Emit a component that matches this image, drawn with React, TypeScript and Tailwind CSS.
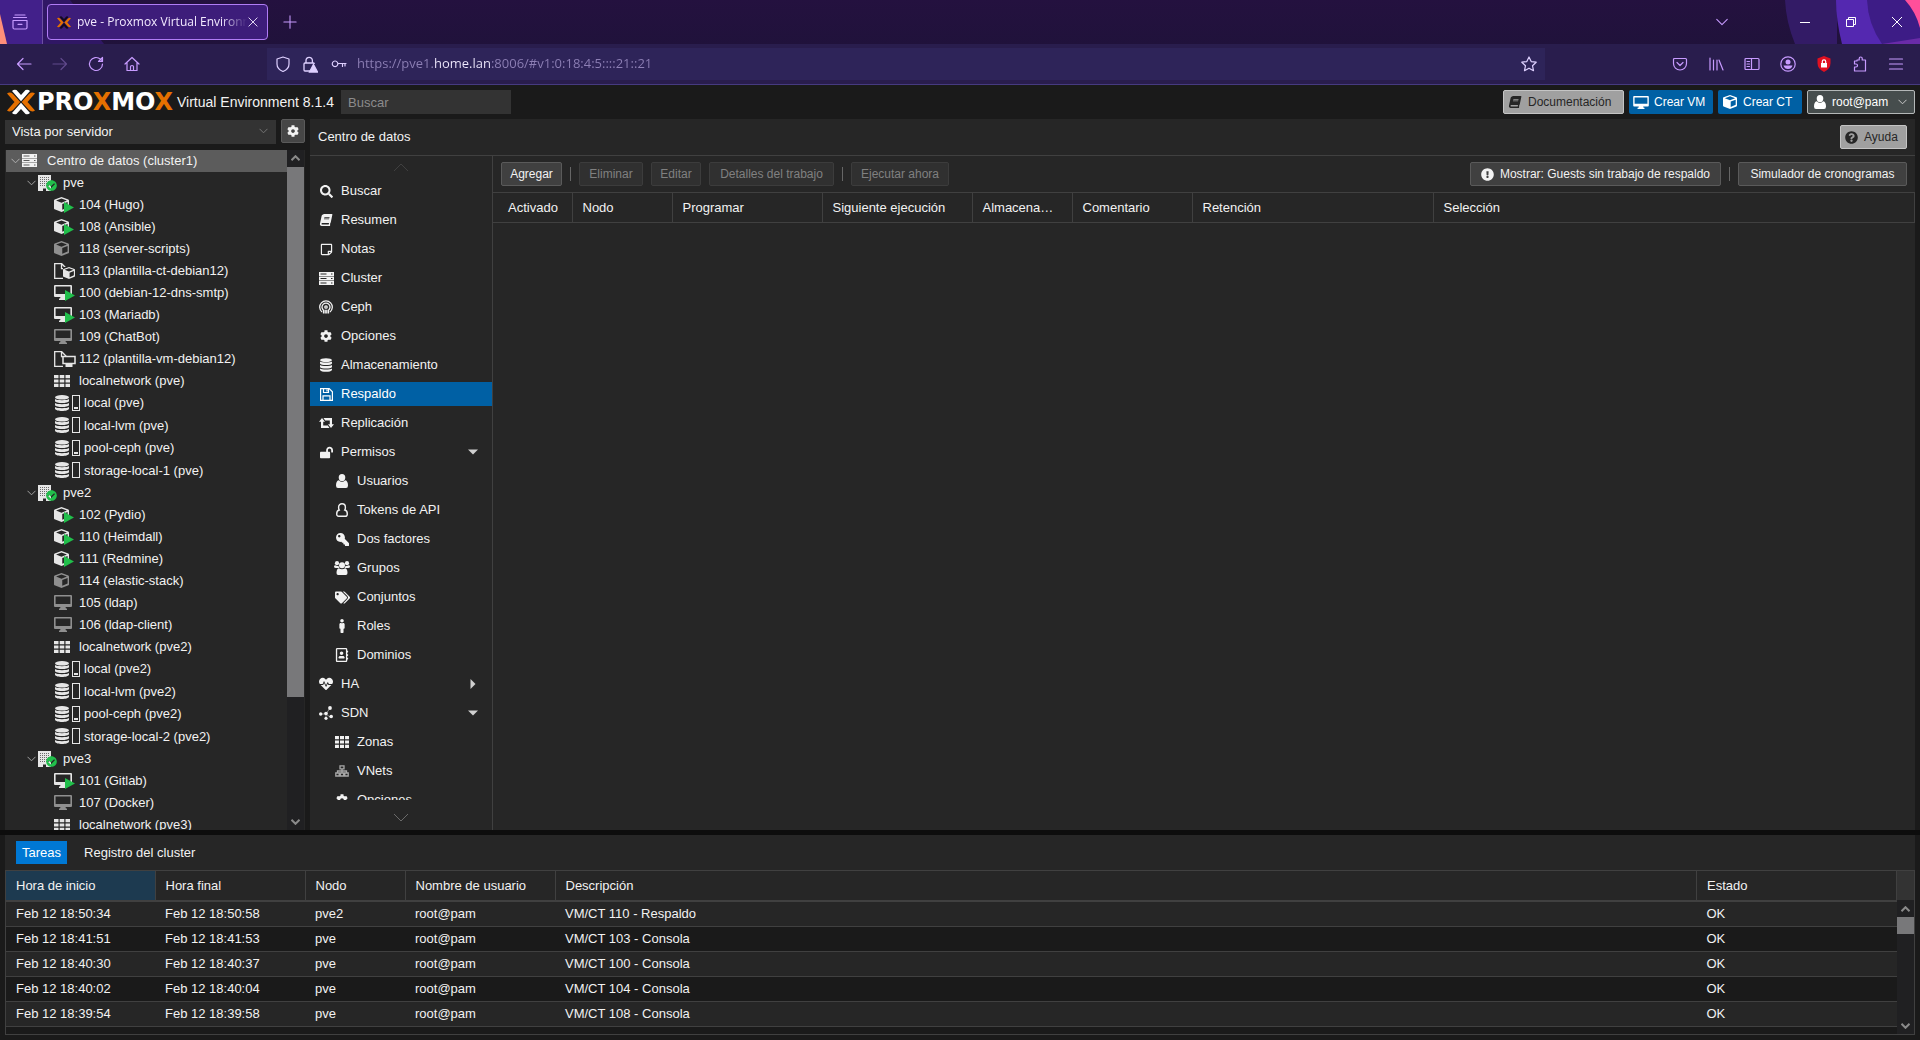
import type { ReactNode } from "react";
import { FaBook, FaCheckCircle, FaCog, FaExclamationCircle, FaHeartbeat, FaKey, FaLockOpen, FaMale, FaQuestionCircle, FaRegAddressBook, FaRegStickyNote, FaSearch, FaTags } from "react-icons/fa";

/* ---------- icons ---------- */

function ServerIcon() {
  return (
    <svg width="15" height="13" viewBox="0 0 15 13" fill="currentColor">
      <path fillRule="evenodd" d="M0 0h15v4H0zM1.500 1.500v1h6v-1zM12 1.500v1h1.500v-1zM0 4.500h15v4H0zM1.500 6v1h6v-1zM12 6v1h1.500v-1zM0 9h15v4H0zM1.500 10.500v1h6v-1zM12 10.500v1h1.500v-1z" />
    </svg>
  );
}

function GridIcon({ width = 16 }: { width?: number }) {
  return (
    <svg className="shrink-0" width={width} height="12" viewBox="0 0 16 12" preserveAspectRatio="none" fill="currentColor">
      <path d="M0 0h4.500v3.200H0zM5.700 0h4.600v3.200H5.700zM11.500 0H16v3.200h-4.500zM0 4.400h4.500v3.200H0zM5.700 4.400h4.600v3.200H5.700zM11.500 4.400H16v3.200h-4.500zM0 8.800h4.500V12H0zM5.700 8.800h4.600V12H5.700zM11.500 8.800H16V12h-4.500z" />
    </svg>
  );
}

function DatabaseIcon({ height = 16 }: { height?: number }) {
  return (
    <svg width={height === 16 ? 14 : 12} height={height} viewBox="0 0 14 16" fill="currentColor">
      <ellipse cx="7" cy="2.300" rx="7" ry="2.300" />
      <path d="M0 4c1.500 1.600 12.500 1.600 14 0v2.200c-1 2.400-13 2.400-14 0zM0 8c1.500 1.600 12.500 1.600 14 0v2.200c-1 2.400-13 2.400-14 0zM0 12c1.500 1.600 12.500 1.600 14 0v1.700c-1 3-13 3-14 0z" />
    </svg>
  );
}

function MonitorIcon({ width = 18 }: { width?: number }) {
  return (
    <svg width={width} height={width - 3} viewBox="0 0 18 15" fill="currentColor">
      <path fillRule="evenodd" d="M1 0h16q1 0 1 1v10q0 1-1 1h-5.500l.5 1.500h1V15H5v-1.500h1l.5-1.500H1q-1 0-1-1V1q0-1 1-1zM1.600 1.600v7.400h14.800V1.600z" />
    </svg>
  );
}

function CubeIcon({ size = 15, className = "" }: { size?: number; className?: string }) {
  return (
    <svg className={className} width={size} height={size} viewBox="0 0 16 16" fill="currentColor">
      <path fillRule="evenodd" d="M8 0l7.300 2.700q.7.300.7 1V12q0 .8-.6 1.100L8.600 15.800q-.6.300-1.200 0L.6 13.100Q0 12.800 0 12V3.700q0-.7.700-1zM8 1.500L2.200 3.800 8 6l5.800-2.200zM8.800 7.500v6.200l5.700-2.600V5.300z" />
    </svg>
  );
}

function BuildingIcon() {
  return (
    <svg width="13" height="16" viewBox="0 0 13 16">
      <path fill="currentColor" d="M0 0h13v16H8v-2.500H5V16H0z" />
      <path stroke="#6a6a6a" strokeWidth="1" strokeDasharray="1 1" d="M2 2.500h9M2 4.500h9M2 6.500h9M2 8.500h9M2 10.500h9" />
    </svg>
  );
}

function PersonIcon({ outline = false }: { outline?: boolean }) {
  return (
    <svg width="12" height="14" viewBox="0 0 12 14" fill={outline ? "none" : "currentColor"} stroke="currentColor" strokeWidth={outline ? 1.4 : 0}>
      <path d={outline
        ? "M3.200 7C2.700 6.300 2.600 5 2.600 4.200 2.600 2.200 4 .8 6 .8s3.400 1.400 3.400 3.400c0 .8-.1 2.100-.6 2.800 1.700.4 2.500 1.700 2.500 3.900 0 1.500-.7 2.400-2 2.400H2.700c-1.300 0-2-.9-2-2.400C.7 8.700 1.500 7.400 3.200 7z"
        : "M6 0a3.200 3.500 0 0 1 0 7.200A3.200 3.500 0 0 1 6 0zM2.700 6.300Q6 9.500 9.300 6.300 12 7 12 11.500q0 2.500-2 2.500H2q-2 0-2-2.500Q0 7 2.700 6.300z"} />
    </svg>
  );
}

function GroupIcon() {
  return (
    <svg width="16" height="14" viewBox="0 0 16 14" fill="currentColor">
      <circle cx="3" cy="2.200" r="2.100" />
      <circle cx="13" cy="2.200" r="2.100" />
      <circle cx="8" cy="4.200" r="3" />
      <path d="M1.500 4.200Q3 5.300 4.500 4.700 4.700 6.300 5.500 7H2Q0 7 0 5.500q0-1.300 1.500-1.300zM14.500 4.200Q13 5.300 11.500 4.700 11.300 6.300 10.500 7H14q2 0 2-1.500 0-1.300-1.500-1.300zM4.800 7.200q3.200 2 6.400 0 2.300.8 2.300 4.800 0 2-1.700 2H4.200q-1.700 0-1.700-2 0-4 2.300-4.800z" />
    </svg>
  );
}

function FloppyIcon() {
  return (
    <svg width="13" height="13" viewBox="0 0 13 13" fill="none" stroke="currentColor" strokeWidth="1.200">
      <path d="M.6.6h8.600l3.200 3.200v8.600H.6zM3 12V7.800h7V12M3.500.8v3.700h5V.8M7 1.500v2" />
    </svg>
  );
}

function RetweetIcon() {
  return (
    <svg width="15" height="10" viewBox="0 0 15 10" fill="currentColor">
      <path d="M3 0l3 3.700H4.200V7.500h4.600L10.500 10H2V3.700H0zM12 10L9 6.300h1.800V2.500H6.200L4.500 0H13v6.300h2z" />
    </svg>
  );
}

function CephIcon() {
  return (
    <svg width="14" height="14" viewBox="0 0 14 14" fill="none" stroke="currentColor" strokeWidth="1.300">
      <circle cx="7" cy="7" r="1.200" />
      <path d="M3 12A6.300 6.300 0 1 1 11 12M4.500 13.500V10.200a4 4 0 1 1 5 0V13.500M6.200 13.500V9.800M7.800 13.500V9.800" />
    </svg>
  );
}

function SdnIcon() {
  return (
    <svg width="14" height="14" viewBox="0 0 14 14" fill="currentColor">
      <path stroke="currentColor" d="M2 8h5l4-6M7 8l4 3M7 8v4" fill="none" strokeWidth=".5" />
      <circle cx="1.700" cy="8" r="1.700" />
      <circle cx="7" cy="7.500" r="1.800" />
      <circle cx="11" cy="2" r="1.900" />
      <circle cx="12.200" cy="10.500" r="1.800" />
      <circle cx="7" cy="12.300" r="1.600" />
    </svg>
  );
}

function NetworkIcon() {
  return (
    <svg width="14" height="12" viewBox="0 0 14 12" fill="none" stroke="#a8a8a8" strokeWidth="1.300">
      <path d="M5 .8h4v3H5zM.8 8h3.400v3H.8zM9.800 8h3.400v3H9.800zM5.300 8h3.400v3H5.300zM7 4v4M2.500 8V6h9v2" />
    </svg>
  );
}

function Chevron({ up = false, className = "" }: { up?: boolean; className?: string }) {
  return (
    <svg className={className} width="9" height="6" viewBox="0 0 9 6" fill="none" stroke="currentColor">
      <path d={up ? "M.5 5.200l4-4 4 4" : "M.5.8l4 4 4-4"} />
    </svg>
  );
}

function LineIcon({ d, size = 16, className = "" }: { d: string; size?: number; className?: string }) {
  return (
    <svg className={className} width={size} height={size} viewBox="0 0 16 16" fill="none" stroke="currentColor" strokeWidth="1.200" strokeLinecap="round" strokeLinejoin="round">
      <path d={d} />
    </svg>
  );
}

/* crossed arms of the logo, upright and sideways */
function XMark({ width, height, upright }: { width: number; height: number; upright: string }) {
  return (
    <svg width={width} height={height} viewBox="0 0 28 26">
      <path fill={upright} d="M5 2q2-2 4.500-1L14 6l4.500-5Q21 0 23 2l-9 10.300zM5 24q2 2 4.500 1L14 20l4.500 5q2.500 1 4.500-1l-9-10.300z" />
      <path fill="#e57000" d="M0 4.500q3-2 6 .5l7.300 8L6 21q-3 2.500-6 .5L7.500 13zM28 4.500q-3-2-6 .5l-7.300 8L22 21q3 2.500 6 .5L20.500 13z" />
    </svg>
  );
}

/* ---------- browser ---------- */

function TabStrip() {
  return (
    <div className="relative h-11 bg-linear-to-b from-[#24113f] to-[#20123b] text-[#c79bff]">
      <svg className="absolute left-0 top-0" width="120" height="44">
        <path fill="#301765" d="M0 0h70l34 44H0z" />
        <path fill="#42208a" d="M0 0h42v44H0z" />
        <path fill="#ff8f7a" d="M0 14l7 30H0z" />
      </svg>
      <svg className="absolute right-0 top-0" width="136" height="44">
        <path fill="#331b66" d="M1 0h52v44H11Q2 22 1 0z" />
        <path fill="#5428b0" d="M52 0h84v44H58Q52 20 52 0z" />
        <path fill="#3d1c86" d="M83 0h53v44H98Q84 24 83 0z" />
        <path fill="#6a2ba8" d="M98 44l38-6v6z" />
        <path fill="#ff4f9a" d="M121 0h15v28Q132 12 121 0z" />
      </svg>
      <div className="relative flex h-full items-center">
        <button aria-label="Firefox View" className="flex h-full w-[43px] items-center justify-center border-r border-[#6d4fa3] pr-0.5">
          <LineIcon d="M3 1h10M1.500 3.500h13M1 6.500h14v7q0 1.500-1.500 1.500h-11Q1 15 1 13.500zM6 10.300h4" />
        </button>
        <div className="ml-1 flex h-9 w-[221px] items-center rounded border border-[#b07cf5] bg-[#3d1d7a] px-2 text-[#f2eaff]">
          <XMark width={16} height={13} upright="#140a1e" />
          <span className="ml-[5px] flex-1 overflow-hidden whitespace-nowrap mask-r-from-85% font-['Open_Sans','Noto_Sans',sans-serif] text-[12px]">pve - Proxmox Virtual Environment</span>
          <button aria-label="Cerrar pestaña">
            <LineIcon size={12} d="M2.500 2.500l11 11M13.500 2.500l-11 11" />
          </button>
        </div>
        <button aria-label="Nueva pestaña" className="ml-[15px]">
          <LineIcon size={14} d="M8 1v14M1 8h14" />
        </button>
        <button aria-label="Listar pestañas" className="ml-auto mr-[70px]">
          <LineIcon size={14} d="M2 5l6 6 6-6" />
        </button>
        <div className="flex gap-[34px] pr-[17px] text-white">
          <button aria-label="Minimizar"><svg width="12" height="12"><path stroke="currentColor" d="M1 6.500h10" /></svg></button>
          <button aria-label="Restaurar"><svg width="12" height="12" fill="none"><path stroke="currentColor" d="M1.500 3.500h7v7h-7zM3.500 3V1.500h7v7H9" /></svg></button>
          <button aria-label="Cerrar"><svg width="12" height="12"><path stroke="currentColor" d="M1 1l10 10M11 1L1 11" /></svg></button>
        </div>
      </div>
    </div>
  );
}

function AddressBar() {
  return (
    <div className="flex h-[41px] items-center border-b border-[#463a80] bg-[#291d4d] text-[#c79bff]">
      <div className="flex w-[267px] items-center gap-5 pl-4">
        <button aria-label="Atrás"><LineIcon d="M15 8H1.500M7 2.500L1.500 8 7 13.500" /></button>
        <button aria-label="Adelante" className="opacity-35"><LineIcon d="M1 8h13.500M9 2.500L14.500 8 9 13.500" /></button>
        <button aria-label="Recargar"><LineIcon d="M14.500 8A6.500 6.500 0 1 1 12.500 3.300L14.500 5M14.500 1.500V5.500H10.500z" /></button>
        <button aria-label="Inicio"><LineIcon d="M1 8l7-6.500L15 8M3 6.500V14.500h10V6.500M6.500 14.500V10.500q0-1 1.500-1t1.500 1v4" /></button>
      </div>
      <div className="flex h-8 flex-1 items-center bg-[#2e2459] px-2 text-[#ded0ff]">
        <LineIcon d="M8 1l6 2v5q0 5-6 7.500Q2 13 2 8V3z" />
        <svg className="ml-[11px]" width="16" height="17" viewBox="0 0 16 17" fill="none" stroke="currentColor" strokeWidth="1.300">
          <path d="M4 7V4.500a3.200 3.200 0 0 1 6.400 0V7M8 15H3q-1 0-1-1V8q0-1 1-1h8.500q.8 0 .8 1" />
          <path fill="currentColor" d="M11.500 8.500L15.500 16h-8z" />
        </svg>
        <LineIcon className="ml-[13px]" d="M4 5a2.800 2.800 0 1 0 .1 0zM7 7.500h8M11.500 7.500v3M14 7.500V10" />
        {/* the host part of the address is lit by a gradient clipped to the text */}
        <input
          aria-label="Dirección"
          defaultValue="https://pve1.home.lan:8006/#v1:0:18:4:5::::21::21"
          className="ml-2.5 flex-1 bg-[linear-gradient(to_right,#8d7fb5_77px,#f0eaff_77px,#f0eaff_134px,#8d7fb5_134px)] bg-clip-text font-['Open_Sans','Noto_Sans',sans-serif] text-[13px] text-transparent outline-none"
        />
        <button aria-label="Marcar página"><LineIcon d="M8 1l2.200 4.600 5 .6-3.700 3.500 1 5L8 12.200 3.500 14.700l1-5L.8 6.200l5-.6z" /></button>
      </div>
      <div className="ml-[127px] mr-4 flex gap-5">
        <button aria-label="Pocket"><LineIcon d="M2.500 2.500h11q1 0 1 1V7.500a6.500 6.500 0 0 1-13 0v-4q0-1 1-1zM5 6.500l3 3 3-3" /></button>
        <button aria-label="Biblioteca"><LineIcon d="M2 2v12M5.500 4v10M9 4v10M11 4l4 10" /></button>
        <button aria-label="Barra lateral"><LineIcon d="M2 2.500h12q1 0 1 1v9q0 1-1 1H2q-1 0-1-1v-9q0-1 1-1zM7.500 2.500v11M3 5.500h2.500M3 8h2.500M3 10.500h2.500" /></button>
        <button aria-label="Cuenta">
          <svg width="16" height="16" viewBox="0 0 16 16" fill="currentColor">
            <circle cx="8" cy="8" r="7.200" fill="none" stroke="currentColor" strokeWidth="1.200" />
            <circle cx="8" cy="6" r="2.500" />
            <path d="M3.500 9.500h9q-1 3.500-4.500 3.500T3.500 9.500z" />
          </svg>
        </button>
        <button aria-label="Bloqueador">
          <svg width="16" height="16" viewBox="0 0 16 16">
            <path fill="#e01020" d="M8 0l6.500 2.500V7q0 6-6.500 9Q1.500 13 1.500 7V2.500z" />
            <path fill="#fff" d="M5 7h6v4.500H5z" />
            <path fill="none" stroke="#fff" strokeWidth="1.200" d="M6.300 7V5.500a1.700 1.700 0 0 1 3.400 0V7" />
          </svg>
        </button>
        <button aria-label="Extensiones"><LineIcon d="M5 5V4h2.200V2.500a1.500 1.500 0 0 1 3 0V4h3.300v11H2.500v-4H4a1.500 1.500 0 0 0 0-3H2.500V5z" /></button>
        <button aria-label="Menú"><LineIcon d="M1.500 3h13M1.500 8h13M1.500 13h13" /></button>
      </div>
    </div>
  );
}

/* ---------- header ---------- */

function Header() {
  return (
    <header className="flex h-[34px] shrink-0 items-center pl-[7px] pr-[5px]">
      <XMark width={28} height={26} upright="#ffffff" />
      <span className="ml-0.5 w-[138px] font-['DejaVu_Sans',sans-serif] text-[24px] font-bold leading-6 text-white">
        PRO<span className="text-[#e57000]">X</span>MO<span className="text-[#e57000]">X</span>
      </span>
      <span className="ml-0.5 w-[164px] whitespace-nowrap text-[14px]">Virtual Environment 8.1.4</span>
      <input aria-label="Buscar" placeholder="Buscar" className="h-6 w-[170px] bg-[#333] px-[7px] text-[13px] outline-none placeholder:text-[#8c8c8c]" />
      <div className="ml-auto flex gap-[5px] text-[12px]">
        <a href="#docs" className="flex h-6 w-[121px] items-center gap-[7px] rounded-xs border border-[#c4c4c4] bg-[#a0a0a0] pl-[5px] text-[#262626]">
          <FaBook size={12} className="-skew-x-12" />
          Documentación
        </a>
        <button className="flex h-6 w-[84px] items-center gap-[5px] whitespace-nowrap rounded-xs bg-[#0060a4] pl-1 text-white">
          <MonitorIcon width={16} />
          Crear VM
        </button>
        <button className="flex h-6 w-[84px] items-center gap-1.5 rounded-xs bg-[#0060a4] pl-[5px] text-white">
          <CubeIcon size={14} />
          Crear CT
        </button>
        <button className="flex h-6 w-[108px] items-center gap-1.5 rounded-xs border border-[#b4b8b8] bg-[#464d4d] pl-1.5 text-white">
          <PersonIcon />
          root@pam
          <Chevron className="ml-1 text-[#c8c8c8]" />
        </button>
      </div>
    </header>
  );
}

/* ---------- resource tree ---------- */

type Kind = "node" | "ct-on" | "ct-off" | "ct-tpl" | "vm-on" | "vm-off" | "vm-tpl" | "net" | "disk" | "disk-used";

const tree: { kind: Kind; label: string }[] = [
  { kind: "node", label: "pve" },
  { kind: "ct-on", label: "104 (Hugo)" },
  { kind: "ct-on", label: "108 (Ansible)" },
  { kind: "ct-off", label: "118 (server-scripts)" },
  { kind: "ct-tpl", label: "113 (plantilla-ct-debian12)" },
  { kind: "vm-on", label: "100 (debian-12-dns-smtp)" },
  { kind: "vm-on", label: "103 (Mariadb)" },
  { kind: "vm-off", label: "109 (ChatBot)" },
  { kind: "vm-tpl", label: "112 (plantilla-vm-debian12)" },
  { kind: "net", label: "localnetwork (pve)" },
  { kind: "disk-used", label: "local (pve)" },
  { kind: "disk", label: "local-lvm (pve)" },
  { kind: "disk-used", label: "pool-ceph (pve)" },
  { kind: "disk", label: "storage-local-1 (pve)" },
  { kind: "node", label: "pve2" },
  { kind: "ct-on", label: "102 (Pydio)" },
  { kind: "ct-on", label: "110 (Heimdall)" },
  { kind: "ct-on", label: "111 (Redmine)" },
  { kind: "ct-off", label: "114 (elastic-stack)" },
  { kind: "vm-off", label: "105 (ldap)" },
  { kind: "vm-off", label: "106 (ldap-client)" },
  { kind: "net", label: "localnetwork (pve2)" },
  { kind: "disk-used", label: "local (pve2)" },
  { kind: "disk", label: "local-lvm (pve2)" },
  { kind: "disk-used", label: "pool-ceph (pve2)" },
  { kind: "disk", label: "storage-local-2 (pve2)" },
  { kind: "node", label: "pve3" },
  { kind: "vm-on", label: "101 (Gitlab)" },
  { kind: "vm-off", label: "107 (Docker)" },
  { kind: "net", label: "localnetwork (pve3)" },
];

function Running() {
  return (
    <svg className="absolute -bottom-px right-0" width="10" height="11" viewBox="0 0 10 11">
      <path fill="#21bf4b" d="M0 0l10 5.500L0 11z" />
    </svg>
  );
}

function TemplateSheet() {
  return (
    <svg width="13" height="16" viewBox="0 0 13 16" fill="none" stroke="currentColor" strokeWidth="1.300">
      <path d="M9 15.300H.7V.7h7l4.500 4.500V7M7.500.7v5H12" />
    </svg>
  );
}

function TreeIcon({ kind }: { kind: Kind }) {
  switch (kind) {
    case "node":
      return (
        <span className="relative flex w-[19px]">
          <BuildingIcon />
          <FaCheckCircle size={11} className="absolute bottom-0 right-0 text-[#21bf4b]" />
        </span>
      );
    case "ct-on":
      return <span className="relative w-5"><CubeIcon /><Running /></span>;
    case "ct-off":
      return <CubeIcon className="text-[#8f8f8f]" />;
    case "ct-tpl":
      return (
        <span className="relative w-[21px]">
          <TemplateSheet />
          <span className="absolute bottom-0 right-0 bg-[#262626]"><CubeIcon size={12} /></span>
        </span>
      );
    case "vm-on":
      return <span className="relative w-[21px]"><MonitorIcon /><Running /></span>;
    case "vm-off":
      return <span className="text-[#8f8f8f]"><MonitorIcon /></span>;
    case "vm-tpl":
      return (
        <span className="relative w-[22px]">
          <TemplateSheet />
          <svg className="absolute bottom-0 right-0" width="14" height="12" viewBox="0 0 14 12">
            <path fill="#262626" stroke="currentColor" strokeWidth="1.500" d="M1 1.500h12v7H1z" />
            <path fill="currentColor" d="M3.500 9h7v3h-7z" />
          </svg>
        </span>
      );
    case "net":
      return <GridIcon />;
    default:
      return (
        <span className="flex gap-[3px] pl-px">
          <DatabaseIcon />
          <span className="flex h-4 w-2 flex-col justify-end border border-current p-px">
            {kind === "disk-used" && <span className="h-0.5 bg-current" />}
          </span>
        </span>
      );
  }
}

function TreeRow({ kind, label }: { kind: Kind; label: string }) {
  if (kind === "node") {
    return (
      <li className="flex h-[22px] items-center pl-[21px]">
        <Chevron className="mr-0.5 text-[#a0a0a0]" />
        <span className="w-[25px] text-[#e6e6e6]"><TreeIcon kind={kind} /></span>
        {label}
      </li>
    );
  }
  const storage = kind === "disk" || kind === "disk-used";
  return (
    <li className={storage ? "flex h-[22px] items-center pl-12 odd:h-[23px]" : "flex h-[22px] items-center pl-12"}>
      <span className={storage ? "w-[30px] text-[#e6e6e6]" : "flex w-[25px] text-[#e6e6e6]"}><TreeIcon kind={kind} /></span>
      {label}
    </li>
  );
}

function ScrollBar({ thumb }: { thumb: string }) {
  return (
    <div className="flex w-[17px] flex-1 flex-col bg-[#202022] text-[#8a8a8a]">
      <button aria-label="Subir" className="flex h-[17px] items-center justify-center"><Chevron up className="stroke-2" /></button>
      <div className="min-h-0 flex-1"><div className={thumb} /></div>
      <button aria-label="Bajar" className="flex h-[17px] items-center justify-center"><Chevron className="stroke-2" /></button>
    </div>
  );
}

function ResourceTree() {
  return (
    <aside className="flex w-[300px] shrink-0 flex-col">
      <div className="flex gap-[5px]">
        <div className="relative flex-1">
          <select aria-label="Vista" className="h-6 w-full appearance-none bg-[#333] px-[7px] text-[13px] outline-none">
            <option>Vista por servidor</option>
          </select>
          <Chevron className="pointer-events-none absolute right-2 top-[9px] text-[#757575]" />
        </div>
        <button aria-label="Ajustes" className="flex size-6 items-center justify-center rounded-xs border border-[#5a5a5a] bg-[#464646]">
          <FaCog size={12} />
        </button>
      </div>
      <div className="mt-1.5 flex min-h-0 flex-1 overflow-hidden bg-[#262626] px-px">
        <ul className="min-w-0 flex-1 whitespace-nowrap text-[13px]">
          <li className="flex h-[22px] items-center bg-[#5c5c5c] pl-[5px]">
            <Chevron className="mr-0.5 text-[#b0b0b0]" />
            <span className="w-[25px]"><ServerIcon /></span>
            Centro de datos (cluster1)
          </li>
          {tree.map((row) => <TreeRow key={row.label} {...row} />)}
        </ul>
        <div className="flex"><ScrollBar thumb="h-[82%] bg-[#78787a]" /></div>
      </div>
    </aside>
  );
}

/* ---------- data centre menu ---------- */

const menu: { label: string; icon: ReactNode; sub?: boolean; open?: boolean }[] = [
  { label: "Buscar", icon: <FaSearch size={13} /> },
  { label: "Resumen", icon: <FaBook size={12} className="-skew-x-12" /> },
  { label: "Notas", icon: <FaRegStickyNote size={13} /> },
  { label: "Cluster", icon: <ServerIcon /> },
  { label: "Ceph", icon: <CephIcon /> },
  { label: "Opciones", icon: <FaCog size={12} /> },
  { label: "Almacenamiento", icon: <DatabaseIcon height={14} /> },
  { label: "Respaldo", icon: <FloppyIcon /> },
  { label: "Replicación", icon: <RetweetIcon /> },
  { label: "Permisos", icon: <FaLockOpen size={13} />, open: true },
  { label: "Usuarios", icon: <PersonIcon />, sub: true },
  { label: "Tokens de API", icon: <PersonIcon outline />, sub: true },
  { label: "Dos factores", icon: <FaKey size={13} className="-scale-x-100" />, sub: true },
  { label: "Grupos", icon: <GroupIcon />, sub: true },
  { label: "Conjuntos", icon: <FaTags size={15} />, sub: true },
  { label: "Roles", icon: <FaMale size={14} />, sub: true },
  { label: "Dominios", icon: <FaRegAddressBook size={14} />, sub: true },
  { label: "HA", icon: <FaHeartbeat size={14} />, open: false },
  { label: "SDN", icon: <SdnIcon />, open: true },
  { label: "Zonas", icon: <GridIcon width={14} />, sub: true },
  { label: "VNets", icon: <NetworkIcon />, sub: true },
  { label: "Opciones", icon: <FaCog size={12} />, sub: true },
];

function SideMenu() {
  return (
    <nav className="flex w-[183px] shrink-0 flex-col border-r border-[#404040] text-[13px]">
      <div className="flex h-[23px] shrink-0 items-center justify-center text-[#404040]">
        <svg width="16" height="9" fill="none" stroke="currentColor"><path d="M1 8l7-7 7 7" /></svg>
      </div>
      <div className="flex min-h-0 flex-1 flex-col gap-[5px] overflow-hidden">
        {menu.map(({ label, icon, sub, open }, i) => (
          <a
            key={i}
            href={`#menu-${i}`}
            className={`flex h-6 shrink-0 items-center ${sub ? "pl-[22px]" : "pl-1.5"} ${label === "Respaldo" ? "bg-[#0060a4] text-white" : ""}`}
          >
            <span className="mr-[5px] flex w-5 justify-center">{icon}</span>
            {label}
            {open !== undefined && (
              <svg className="ml-auto mr-3.5" width="10" height="10" fill="#d0d0d0">
                <path d={open ? "M0 2.500h10l-5 5z" : "M2.500 0v10l5-5z"} />
              </svg>
            )}
          </a>
        ))}
      </div>
      <div className="flex h-[30px] shrink-0 items-center justify-center pt-1 text-[#6a6a6a]">
        <svg width="16" height="9" fill="none" stroke="currentColor"><path d="M1 1l7 7 7-7" /></svg>
      </div>
    </nav>
  );
}

/* ---------- backup grid ---------- */

function ToolButton({ children, className = "", disabled = false }: { children: ReactNode; className?: string; disabled?: boolean }) {
  return (
    <button
      disabled={disabled}
      className={`flex h-6 items-center justify-center gap-1.5 whitespace-nowrap rounded-xs border border-[#5a5a5a] bg-[#404040] disabled:border-[#3c3c3c] disabled:bg-[#303030] disabled:text-[#808080] ${className}`}
    >
      {children}
    </button>
  );
}

function Separator() {
  return <span className="h-3.5 w-px bg-[#666]" />;
}

const backupColumns = [
  { label: "Activado", width: "w-[79px]" },
  { label: "Nodo", width: "w-[100px]" },
  { label: "Programar", width: "w-[150px]" },
  { label: "Siguiente ejecución", width: "w-[150px]" },
  { label: "Almacenamiento", width: "w-[100px]" },
  { label: "Comentario", width: "w-[120px]" },
  { label: "Retención", width: "w-[241px]" },
  { label: "Selección", width: "" },
];

function BackupPanel() {
  return (
    <section className="min-w-0 flex-1">
      <div className="flex h-9 items-center gap-2 px-2 text-[12px]">
        <ToolButton className="w-[61px]">Agregar</ToolButton>
        <Separator />
        <ToolButton disabled className="w-[64px]">Eliminar</ToolButton>
        <ToolButton disabled className="w-[50px]">Editar</ToolButton>
        <ToolButton disabled className="w-[125px]">Detalles del trabajo</ToolButton>
        <Separator />
        <ToolButton disabled className="w-[98px]">Ejecutar ahora</ToolButton>
        <ToolButton className="ml-auto w-[251px]">
          <FaExclamationCircle size={13} />
          Mostrar: Guests sin trabajo de respaldo
        </ToolButton>
        <Separator />
        <ToolButton className="w-[169px]">Simulador de cronogramas</ToolButton>
      </div>
      <table className="w-full table-fixed border-r border-[#404040] text-left text-[13px]">
        <thead>
          <tr className="h-[30px] border-y border-[#404040]">
            {backupColumns.map(({ label, width }) => (
              <th key={label} className={`truncate border-r border-[#404040] pl-2.5 pr-2.5 font-normal first:pl-[15px] first:pr-0 last:border-r-0 ${width}`}>
                {label}
              </th>
            ))}
          </tr>
        </thead>
      </table>
    </section>
  );
}

/* ---------- task log ---------- */

const taskColumns = [
  { label: "Hora de inicio", width: "w-[149px]" },
  { label: "Hora final", width: "w-[150px]" },
  { label: "Nodo", width: "w-[100px]" },
  { label: "Nombre de usuario", width: "w-[150px]" },
  { label: "Descripción", width: "" },
  { label: "Estado", width: "w-[200px]" },
];

const tasks = [
  ["Feb 12 18:50:34", "Feb 12 18:50:58", "pve2", "root@pam", "VM/CT 110 - Respaldo", "OK"],
  ["Feb 12 18:41:51", "Feb 12 18:41:53", "pve", "root@pam", "VM/CT 103 - Consola", "OK"],
  ["Feb 12 18:40:30", "Feb 12 18:40:37", "pve", "root@pam", "VM/CT 100 - Consola", "OK"],
  ["Feb 12 18:40:02", "Feb 12 18:40:04", "pve", "root@pam", "VM/CT 104 - Consola", "OK"],
  ["Feb 12 18:39:54", "Feb 12 18:39:58", "pve", "root@pam", "VM/CT 108 - Consola", "OK"],
];

function TaskLog() {
  return (
    <section className="mx-[5px] mb-[5px] h-[200px] shrink-0 bg-[#262626] text-[13px]">
      <div role="tablist" className="flex h-[35px] items-center gap-2.5 pl-[11px]">
        <button role="tab" aria-selected="true" className="h-[23px] bg-[#0078d4] px-1.5 text-white">Tareas</button>
        <button role="tab" aria-selected="false" className="h-[23px] px-[7px]">Registro del cluster</button>
      </div>
      <div className="flex h-[165px] border border-[#404040] bg-[#1a1a1a]">
        <div className="min-w-0 flex-1">
          <table className="w-full table-fixed text-left">
            <thead>
              <tr className="h-[30px] border-b-2 border-[#404040] bg-[#262626]">
                {taskColumns.map(({ label, width }) => (
                  <th key={label} className={`border-r border-[#404040] px-2.5 font-normal first:bg-[#1d3a50] ${width}`}>{label}</th>
                ))}
              </tr>
            </thead>
            <tbody>
              {tasks.map((task) => (
                <tr key={task[0]} className="h-[25px] border-b border-[#404040] odd:bg-[#262626]">
                  {task.map((cell, i) => <td key={i} className="px-2.5">{cell}</td>)}
                </tr>
              ))}
            </tbody>
          </table>
        </div>
        <div className="flex flex-col">
          <div className="h-[29px] bg-[#333]" />
          <ScrollBar thumb="h-[17px] bg-[#78787a]" />
        </div>
      </div>
    </section>
  );
}

export default function App() {
  return (
    <div className="flex h-screen flex-col overflow-hidden bg-[#1a1a1a] font-['Liberation_Sans',Arial,sans-serif] text-[#f2f2f2]">
      <TabStrip />
      <AddressBar />
      <Header />
      <main className="flex min-h-0 flex-1 gap-[5px] px-[5px]">
        <ResourceTree />
        <div className="flex min-w-0 flex-1 flex-col bg-[#262626]">
          <div className="flex h-[37px] shrink-0 items-center justify-between border-b border-[#404040] px-2">
            <h1 className="text-[13px]">Centro de datos</h1>
            <button className="flex h-6 w-[67px] items-center gap-1.5 rounded-xs border border-[#c4c4c4] bg-[#a0a0a0] pl-1 text-[12px] text-[#262626]">
              <FaQuestionCircle size={13} />
              Ayuda
            </button>
          </div>
          <div className="flex min-h-0 flex-1">
            <SideMenu />
            <BackupPanel />
          </div>
        </div>
      </main>
      <div className="h-[5px] shrink-0 bg-[#0d0d0d]" />
      <TaskLog />
    </div>
  );
}
